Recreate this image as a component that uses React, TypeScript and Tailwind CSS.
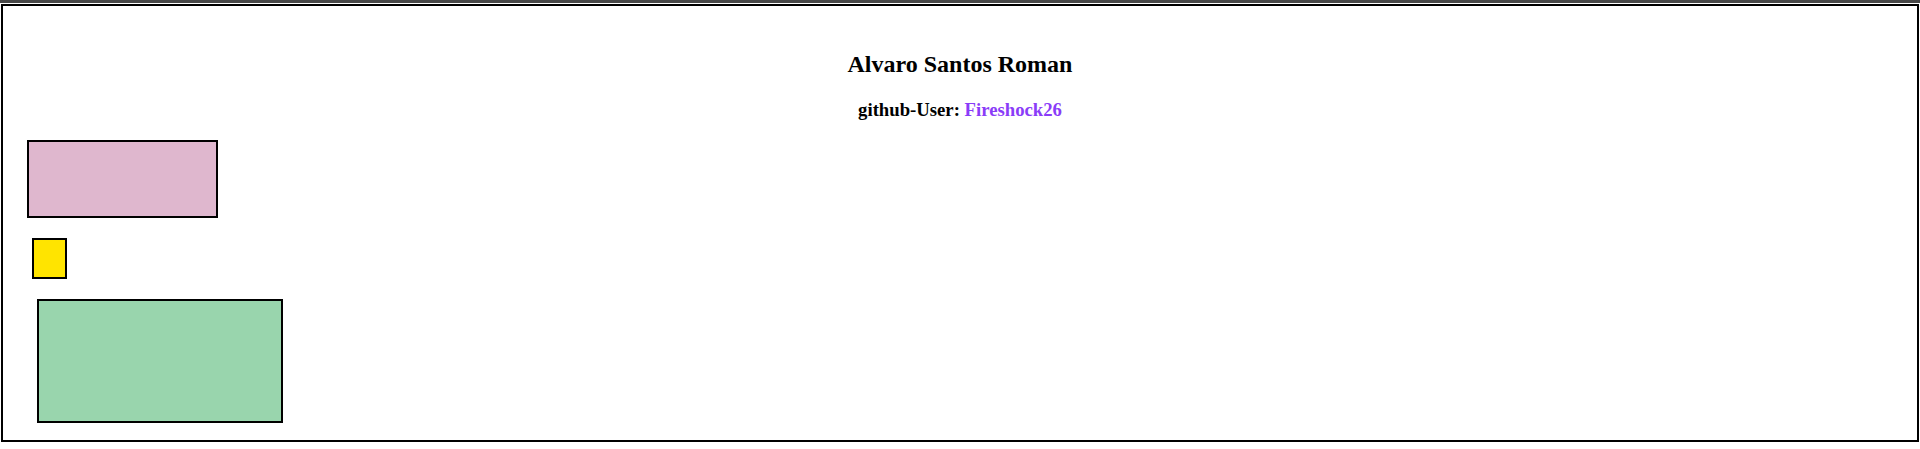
import React from "react";

export default function App() {
  return (
    <div className="min-h-[449px] bg-white font-['Liberation_Serif',serif] text-black">
      <div className="h-[3px] bg-[#474747]" />
      <div className="mx-px mt-px h-[438px] border-2 border-black">
        <h2 className="mt-[45px] text-center text-[24px] font-bold leading-[1.15]">
          Alvaro Santos Roman
        </h2>
        <p className="mt-[20px] text-center text-[18.72px] font-bold leading-[1.15]">
          github-User: <span className="text-[#8a3cf8]">Fireshock26</span>
        </p>
        <div className="ml-[24px] mt-[20px] h-[78px] w-[191px] border-2 border-black bg-[#dfb7ce]" />
        <div className="ml-[29px] mt-[20px] h-[41px] w-[35px] border-2 border-black bg-[#ffe400]" />
        <div className="ml-[34px] mt-[20px] h-[124px] w-[246px] border-2 border-black bg-[#99d5ad]" />
      </div>
    </div>
  );
}
